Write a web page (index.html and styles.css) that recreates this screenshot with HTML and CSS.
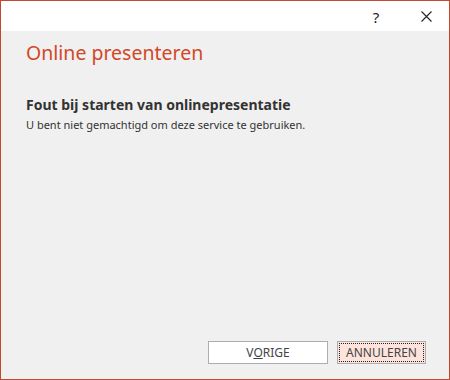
FILE: index.html
```html
<!DOCTYPE html>
<html lang="nl">
<head>
    <meta charset="UTF-8">
    <title>Online presenteren</title>
    <link rel="stylesheet" href="styles.css">
</head>
<body>
    <div class="dialog">
        <div class="titlebar">
            <span class="help-btn">?</span>
            <span class="close-btn">
                <svg width="11" height="11" viewBox="0 0 11 11">
                    <path d="M0.5 0.5 L10.5 10.5 M10.5 0.5 L0.5 10.5" stroke="#222" stroke-width="1.1" fill="none"/>
                </svg>
            </span>
        </div>
        <div class="content">
            <div class="title">Online presenteren</div>
            <div class="error-title">Fout bij starten van onlinepresentatie</div>
            <p class="error-text">U bent niet gemachtigd om deze service te gebruiken.</p>
        </div>
        <div class="buttons">
            <button class="btn">V<u>O</u>RIGE</button>
            <button class="btn btn-focus"><span class="focus-ring">ANNULEREN</span></button>
        </div>
    </div>
</body>
</html>
```

FILE: styles.css
```css
body {
    margin: 0;
    padding: 0;
    font-family: "Noto Sans", "Open Sans", sans-serif;
}
.dialog {
    width: 450px;
    height: 380px;
    box-sizing: border-box;
    border: 1px solid #c4482b;
    background: #f0f0f0;
    display: flex;
    flex-direction: column;
}
.titlebar {
    height: 30px;
    background: #fff;
    display: flex;
    align-items: center;
    justify-content: flex-end;
    color: #222;
}
.help-btn {
    font-size: 15px;
    width: 20px;
    text-align: center;
    margin-right: 35px;
    margin-top: 1px;
}
.close-btn {
    display: flex;
    width: 11px;
    margin-right: 17px;
}
.content {
    flex: 1;
    padding: 0 25px;
}
.title {
    font-size: 19.5px;
    color: #d24726;
    margin-top: 7px;
    line-height: 30px;
}
.error-title {
    font-size: 14px;
    font-weight: bold;
    color: #333;
    margin-top: 27px;
    line-height: 20px;
}
.error-text {
    font-size: 11px;
    color: #333;
    margin: 2px 0 0;
    line-height: 15px;
}
.buttons {
    display: flex;
    justify-content: flex-end;
    gap: 9px;
    padding: 0 23px 15px 0;
}
.btn {
    width: 120px;
    height: 23px;
    border: 1px solid #adadad;
    background: #fff;
    color: #444;
    font-family: "Noto Sans", "Open Sans", sans-serif;
    font-size: 12px;
    padding: 0;
}
.btn-focus {
    width: 89px;
    background: #fce4dd;
    padding: 1px;
}
.focus-ring {
    display: flex;
    align-items: center;
    justify-content: center;
    height: 100%;
    box-sizing: border-box;
    border: 1px dotted #222;
}
```
